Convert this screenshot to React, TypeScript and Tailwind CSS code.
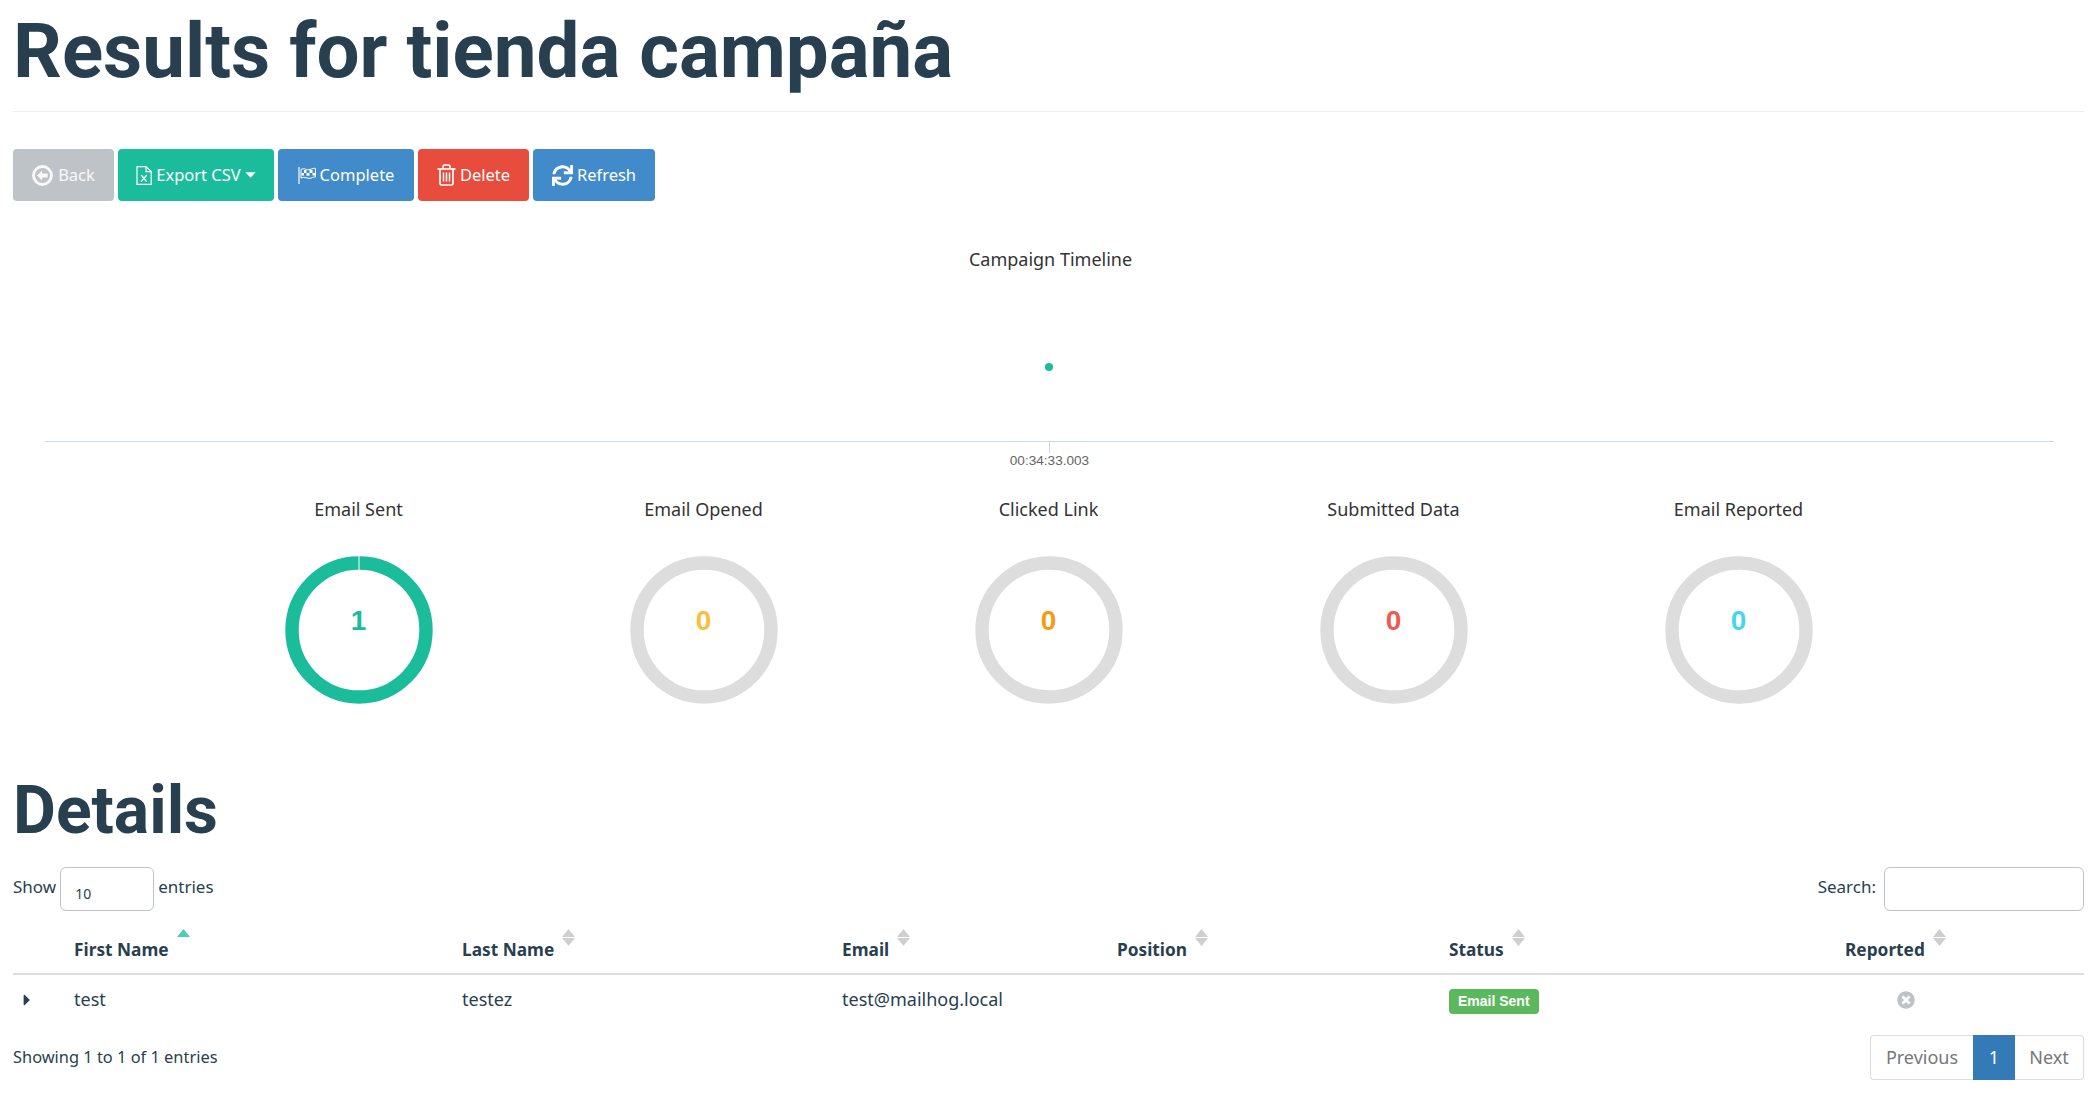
import React from "react";
import { FaSync, FaCaretRight, FaTimesCircle } from "react-icons/fa";

const bodyFont = "font-['Noto_Sans',sans-serif]";

function BackIcon() {
  return (
    <svg viewBox="0 0 22 22" className="mr-[5px] h-[21px] w-[21px]">
      <circle cx="11" cy="11" r="9.4" fill="none" stroke="currentColor" strokeWidth="3" />
      <path d="M5.2 11 L10.6 5.8 L10.6 8.8 L16.4 8.8 L16.4 13.2 L10.6 13.2 L10.6 16.2 Z" fill="currentColor" />
    </svg>
  );
}

function FileIcon() {
  return (
    <svg viewBox="0 0 16 19" className="mr-[4px] h-[19px] w-[16px]" fill="none" stroke="currentColor">
      <path d="M1 .6 H10 L15.2 5.6 V18.4 H1 Z" strokeWidth="1.2" />
      <path d="M10 .6 V5.6 H15.2" strokeWidth="1.2" />
      <path d="M5.2 9 L10.6 15.6 M10.8 9 L5 15.6" strokeWidth="1.4" />
    </svg>
  );
}

function FlagIcon() {
  return (
    <svg viewBox="0 0 18 17" className="mr-[4px] h-[17px] w-[18px]" fill="none" stroke="currentColor">
      <path d="M1 0 V17" strokeWidth="1.2" />
      <path d="M3 2.5 C6 .5 9 3.5 12 2.5 S16 1 17.4 1.4 V10 C15 9.8 14 11 12 11.4 S6 9.2 3 11 Z" strokeWidth="1" />
      <path d="M6 3 H8.5 V6 H6 Z M8.5 6 H11.5 V8.8 H8.5 Z M11.5 3 H14.5 V6 H11.5 Z M3.5 6 H6 V8.6 H3.5 Z M14.5 6 H17 V8.6 H14.5 Z" fill="currentColor" stroke="none" />
    </svg>
  );
}

function TrashIcon() {
  return (
    <svg viewBox="0 0 19 22" className="mr-[4px] h-[22px] w-[19px]" fill="none" stroke="currentColor">
      <path d="M.5 5 H18.5" strokeWidth="1.7" />
      <path d="M6 5 V2.6 Q6 1 7.6 1 H11.4 Q13 1 13 2.6 V5" strokeWidth="1.6" />
      <path d="M3 5 V19.4 Q3 21 4.6 21 H14.4 Q16 21 16 19.4 V5" strokeWidth="1.7" />
      <path d="M6.5 8.5 V17.5 M9.5 8.5 V17.5 M12.5 8.5 V17.5" strokeWidth="1.5" />
    </svg>
  );
}

function CaretDownIcon() {
  return (
    <svg viewBox="0 0 11 6" className="ml-[4px] h-[6px] w-[11px]">
      <path d="M.4 .3 H10.6 L5.5 5.8 Z" fill="currentColor" />
    </svg>
  );
}

function Donut({ title, value, color, ring }: { title: string; value: number; color: string; ring: string }) {
  return (
    <div className="flex w-[345px] flex-col items-center">
      <div className="h-[24px] text-[18px] leading-[24px] text-[#333]">{title}</div>
      <div className="relative mt-[35px] h-[148px] w-[148px]">
        <svg viewBox="0 0 148 148" className="h-[148px] w-[148px]">
          <circle cx="74" cy="74" r="67" fill="none" stroke={ring} strokeWidth="13.4" />
          {value > 0 && <rect x="73.5" y="0" width="1" height="14" fill="#fff" />}
        </svg>
        <div
          className={`absolute inset-x-0 top-[47px] text-center font-['Liberation_Sans',sans-serif] text-[28px] font-bold leading-[36px] ${
            color
          }`}
        >
          {value}
        </div>
      </div>
    </div>
  );
}

function SortArrows({ active }: { active?: boolean }) {
  return (
    <span className="relative -top-[13px] ml-[8px] inline-flex h-[18px] w-[13px] flex-col items-center align-middle">
      <svg viewBox="0 0 13 8" className="h-[8px] w-[13px]">
        <path d="M6.5 0 L13 8 L0 8 Z" fill={active ? "#48cfae" : "#cfcfcf"} />
      </svg>
      {!active && (
        <svg viewBox="0 0 13 8" className="mt-[1px] h-[8px] w-[13px]">
          <path d="M0 0 L13 0 L6.5 8 Z" fill="#cfcfcf" />
        </svg>
      )}
    </span>
  );
}

const buttons = [
  { label: "Back", icon: <BackIcon />, cls: "w-[101px] bg-[#bdc3c7] text-white/90" },
  { label: "Export CSV", icon: <FileIcon />, cls: "w-[156px] bg-[#1abc9c] text-white", caret: true },
  { label: "Complete", icon: <FlagIcon />, cls: "w-[136px] bg-[#428bca] text-white" },
  { label: "Delete", icon: <TrashIcon />, cls: "w-[111px] bg-[#e74c3c] text-white" },
  { label: "Refresh", icon: <FaSync className="mr-[4px] text-[21px]" />, cls: "w-[122px] bg-[#428bca] text-white" },
];

const donuts = [
  { title: "Email Sent", value: 1, color: "text-[#1abc9c]", ring: "#1abc9c" },
  { title: "Email Opened", value: 0, color: "text-[#f9bf3b]", ring: "#dddddd" },
  { title: "Clicked Link", value: 0, color: "text-[#f39c12]", ring: "#dddddd" },
  { title: "Submitted Data", value: 0, color: "text-[#f05b4f]", ring: "#dddddd" },
  { title: "Email Reported", value: 0, color: "text-[#45d6ef]", ring: "#dddddd" },
];

const columns = [
  { label: "First Name", width: "w-[388px]", active: true },
  { label: "Last Name", width: "w-[380px]" },
  { label: "Email", width: "w-[275px]" },
  { label: "Position", width: "w-[332px]" },
  { label: "Status", width: "w-[396px]" },
  { label: "Reported", width: "" },
];

export default function App() {
  return (
    <div className={`min-h-screen bg-white pl-[13px] pr-[9px] text-[#283f50] ${bodyFont}`}>
      <div className="h-[112px] border-b border-[#eeeeee]">
        <h1 className="pt-[7px] font-['Roboto',sans-serif] text-[76.3px] font-bold leading-[88px]">Results for tienda campaña</h1>
      </div>

      {/* Actions */}
      <div className="mt-[37px] flex gap-[4px]">
        {buttons.map((b) => (
          <div
            key={b.label}
            className={`flex h-[52px] items-center justify-center rounded-[4px] text-[16.5px] ${b.cls}`}
          >
            {b.icon}
            {b.label}
            {b.caret && <CaretDownIcon />}
          </div>
        ))}
      </div>

      {/* Timeline */}
      <div className="mt-[46px] pl-[32px] pr-[30px]">
        <div className="ml-[-32px] mr-[-30px] pl-[4px] text-center text-[18px] leading-[24px] text-[#333]">Campaign Timeline</div>
        <svg viewBox="0 0 2009 201" className="block h-[201px] w-[2009px]">
          <circle cx="1004" cy="96" r="4" fill="#1abc9c" />
          <line x1="0" y1="170.5" x2="2009" y2="170.5" stroke="#ccd6eb" />
          <line x1="1004.5" y1="170" x2="1004.5" y2="182" stroke="#ccd6eb" />
          <text x="1004.5" y="194" textAnchor="middle" fontFamily="Liberation Sans" fontSize="13.6" fill="#666">00:34:33.003</text>
        </svg>
      </div>

      {/* Donuts */}
      <div className="mt-[25px] flex pl-[173px]">
        {donuts.map((d) => (
          <Donut key={d.title} {...d} />
        ))}
      </div>

      <h2 className="mt-[63px] font-['Roboto',sans-serif] text-[66px] font-bold leading-[88px]">Details</h2>

      {/* Table controls */}
      <div className="mt-[12px] flex h-[44px] items-center justify-between text-[17px]">
        <div className="flex items-center">
          <span className="pb-[4px]">Show</span>
          <div className="mx-[4px] flex h-[44px] w-[94px] items-end rounded-[6px] border border-[#bdc3c7] pb-[6px] pl-[14px] text-[14px]">10</div>
          <span className="pb-[4px]">entries</span>
        </div>
        <div className="flex items-center">
          <span className="pb-[4px]">Search:</span>
          <div className="ml-[8px] h-[44px] w-[200px] rounded-[6px] border border-[#bdc3c7]" />
        </div>
      </div>

      <table className="mt-[10px] w-full table-fixed border-collapse text-[18px]">
        <thead>
          <tr className="border-b-2 border-[#dddddd]">
            <th className="w-[53px]" />
            {columns.map((c) => (
              <th key={c.label} className={`h-[53px] px-[8px] pt-[6px] text-left text-[17.3px] font-bold ${c.width}`}>
                {c.label}
                <SortArrows active={c.active} />
              </th>
            ))}
          </tr>
        </thead>
        <tbody>
          <tr>
            <td className="pl-[5px]">
              <FaCaretRight className="text-[18px]" />
            </td>
            <td className="h-[50px] px-[8px]">test</td>
            <td className="px-[8px]">testez</td>
            <td className="px-[8px]">test@mailhog.local</td>
            <td className="px-[8px]" />
            <td className="px-[8px]">
              <span className="inline-block rounded-[4px] bg-[#5cb85c] px-[9px] py-[4px] font-['Liberation_Sans',sans-serif] text-[14px] font-bold leading-[17px] text-white">
                Email Sent
              </span>
            </td>
            <td className="px-[8px] pl-[60px]">
              <FaTimesCircle className="text-[18px] text-[#bdc3c7]" />
            </td>
          </tr>
        </tbody>
      </table>

      {/* Table footer */}
      <div className="mt-[11px] flex items-center justify-between text-[16.4px]">
        <div>Showing 1 to 1 of 1 entries</div>
        <div className="flex h-[45px] items-stretch text-[18px] text-[#777]">
          <div className="flex w-[103px] items-center justify-center rounded-l-[4px] border border-r-0 border-[#ddd]">Previous</div>
          <div className="flex w-[42px] items-center justify-center bg-[#337ab7] text-white">1</div>
          <div className="flex w-[69px] items-center justify-center rounded-r-[4px] border border-l-0 border-[#ddd]">Next</div>
        </div>
      </div>
    </div>
  );
}
